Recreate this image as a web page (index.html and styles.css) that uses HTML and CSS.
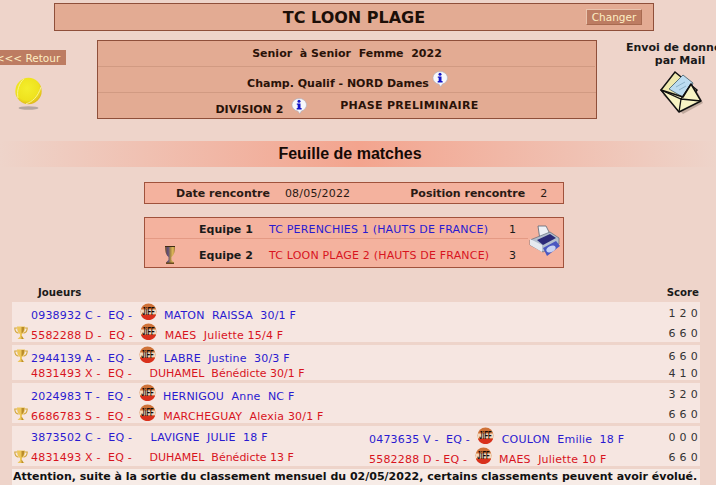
FILE: index.html
```html
<!DOCTYPE html>
<html lang="fr">
<head>
<meta charset="utf-8">
<title>Feuille de matches</title>
<link rel="stylesheet" href="styles.css">
</head>
<body>
<svg class="defs" width="0" height="0">
  <defs>
    <radialGradient id="ballfill" cx=".45" cy=".4" r=".6">
      <stop offset="0" stop-color="#f4ee2c"/>
      <stop offset=".75" stop-color="#efe21e"/>
      <stop offset="1" stop-color="#dfb81c"/>
    </radialGradient>
    <linearGradient id="gobfill" x1="0" x2="1" y1="0" y2="0">
      <stop offset="0" stop-color="#7c5a2a"/>
      <stop offset=".3" stop-color="#5a4a80"/>
      <stop offset=".55" stop-color="#a98a48"/>
      <stop offset=".8" stop-color="#e3bc5c"/>
      <stop offset="1" stop-color="#8c6a2a"/>
    </linearGradient>
    <symbol id="jiff" viewBox="0 0 18 18">
      <circle cx="9" cy="9" r="8.500" fill="#cf7238"/>
      <path d="M.6 7h16.800l.1 5H.5z" fill="#f3d9bf"/>
      <path d="M1 12.500h16a8.500 8.500 0 0 1-16 0z" fill="#d9301c"/>
      <text x="9" y="12.500" text-anchor="middle" textLength="13" lengthAdjust="spacingAndGlyphs" class="jiff-text">JiFF</text>
    </symbol>
    <symbol id="cup" viewBox="0 0 14 14">
      <path d="M3 2H.8C.8 5.500 2.500 6.800 4.500 7.200M11 2h2.200c0 3.500-1.700 4.800-3.700 5.200" fill="none" stroke="#d3a73c" stroke-width="1.100"/>
      <path d="M3 .5h8c0 4-1 6.500-3 7.500v2.500l2.500 2.500h-7L6 10.500V8C4 7 3 4.500 3 .5z" fill="#edc65a"/>
      <path d="M7.500 1h2.800c0 3-.8 5.500-2.800 6.500zM7.500 10h.5l1.500 3h-2z" fill="#b98c2a"/>
    </symbol>
    <symbol id="info" viewBox="0 0 16 16">
      <path d="M8 .5a7.300 6.400 0 0 1 2.400 12.500L8.800 15.800 7 13.200A7.300 6.400 0 0 1 8 .5z" fill="#f7f8fc" stroke="#a9acbd" stroke-width=".6"/>
      <circle cx="8" cy="3.200" r="1.500" fill="#1414c8"/>
      <path d="M5.800 5.500h3.700v4.600h1.100v1.300H5.700v-1.300h1V6.800h-.9z" fill="#1414c8"/>
    </symbol>
  </defs>
</svg>

<div class="page">
  <header class="title-box">
    <h1 class="club">TC LOON PLAGE</h1>
    <span class="btn btn-change">Changer</span>
  </header>

  <section class="top">
    <div class="back">
      <span class="btn btn-back">&lt;&lt;&lt; Retour</span>
      <svg class="ball" viewBox="0 0 30 34" width="30" height="34">
        <ellipse cx="14.500" cy="31" rx="10" ry="1.800" fill="#b5a6a0"/>
        <circle cx="14.500" cy="14" r="13.200" fill="url(#ballfill)"/>
        <path d="M10 1.800C5 6 2.500 14 4 21M27 10C24 20 18 25 12 26.800" fill="none" stroke="#f8f3a0" stroke-width=".9"/>
      </svg>
    </div>

    <div class="info-box">
      <div class="info-line">Senior&nbsp; à Senior&nbsp; Femme&nbsp; 2022</div>
      <div class="info-line info-mid"><span>Champ. Qualif - NORD Dames</span><svg class="info-ic raised"><use href="#info"/></svg></div>
      <div class="info-line info-split">
        <span class="div-name">DIVISION 2 <svg class="info-ic raised"><use href="#info"/></svg></span>
        <span class="phase">PHASE PRELIMINAIRE</span>
      </div>
    </div>

    <div class="mail">
      <div class="mail-text">Envoi de données<br>par Mail</div>
      <svg class="mail-ic" viewBox="0 0 44 44" width="44" height="44">
        <path d="M3 23 23 42 43 31 36 17 17 3z" fill="#6b5a4a" opacity=".35" transform="translate(1 2)"/>
        <path d="M2 20 16 2l22 18-16 20z" fill="#efe9ae" stroke="#111" stroke-width="1.500"/>
        <path d="M10 19 24 5l10 8-7 16z" fill="#bcdcf0" stroke="#3e5a68" stroke-width=".8"/>
        <path d="M17 17l9-5M20 20l7-4" stroke="#7fa8bf" stroke-width=".8"/>
        <path d="M2 20 24 27 32 14 42 31 20 42z" fill="#f8f4c4" stroke="#111" stroke-width="1.500" stroke-linejoin="round"/>
        <path d="M2 20 22 29 42 31M20 42 22 29 32 14" fill="none" stroke="#111" stroke-width="1.300"/>
      </svg>
    </div>
  </section>

  <h2 class="band"><span class="band-text">Feuille de matches</span></h2>

  <section class="date-box">
    <b class="date-label">Date rencontre</b>
    <span class="date-value">08/05/2022</span>
    <b class="pos-label">Position rencontre</b>
    <span class="pos-value">2</span>
  </section>

  <section class="teams">
    <div class="team team-1">
      <span class="team-ic"></span>
      <b class="team-label">Equipe 1</b>
      <span class="team-name blue">TC PERENCHIES 1 (HAUTS DE FRANCE)</span>
      <span class="team-score">1</span>
    </div>
    <div class="team team-2">
      <span class="team-ic">
        <svg viewBox="0 0 14 20" width="14" height="20">
          <path d="M2 1h10c0 6-1 9-3.500 11v3l2.500 2.500V19H3v-1.500L5.500 15v-3C3 10 2 7 2 1z" fill="url(#gobfill)"/>
          <path d="M3 17.500h8V19H3z" fill="#6a4a1e"/>
          <path d="M2 1h10v1H2z" fill="#3d2c14"/>
        </svg>
      </span>
      <b class="team-label">Equipe 2</b>
      <span class="team-name red">TC LOON PLAGE 2 (HAUTS DE FRANCE)</span>
      <span class="team-score">3</span>
    </div>
    <svg class="printer" viewBox="0 0 32 32" width="32" height="32">
      <path d="M9 1h8l5 10-11 4z" fill="#eef1f6" stroke="#5a6474" stroke-width=".8"/>
      <path d="M1 15 21 7l9 6v6L14 27 1 20z" fill="#b4bfce" stroke="#4f5a6a" stroke-width=".6"/>
      <path d="M1 14l12 6v7L1 20z" fill="#e6eaf0"/>
      <path d="M8 15 21 9l6 4-13 7z" fill="#2c2a78"/>
      <path d="M14 23 27 16l4 5-13 10z" fill="#4a57c0"/>
      <ellipse cx="22" cy="24" rx="5" ry="3" fill="#c8d2f2" transform="rotate(-25 22 24)"/>
    </svg>
  </section>

  <section class="players">
    <div class="players-head"><b>Joueurs</b><b>Score</b></div>

    <div class="match match-a">
      <div class="line"><span class="slot"></span><span class="p blue">0938932 C -  EQ -  <svg class="jiff"><use href="#jiff"/></svg>  MATON  RAISSA  30/1 F</span><span class="score">1 2 0</span></div>
      <div class="line"><span class="slot"><svg class="cup"><use href="#cup"/></svg></span><span class="p red">5582288 D -  EQ -  <svg class="jiff"><use href="#jiff"/></svg>  MAES  Juliette 15/4 F</span><span class="score">6 6 0</span></div>
    </div>

    <div class="match match-b">
      <div class="line"><span class="slot"><svg class="cup"><use href="#cup"/></svg></span><span class="p blue">2944139 A -  EQ -  <svg class="jiff"><use href="#jiff"/></svg>  LABRE  Justine  30/3 F</span><span class="score">6 6 0</span></div>
      <div class="line short"><span class="slot"></span><span class="p red">4831493 X -  EQ -     <span class="tight">DUHAMEL  Bénédicte 30/1 F</span></span><span class="score score-low">4 1 0</span></div>
    </div>

    <div class="match match-c">
      <div class="line"><span class="slot"></span><span class="p blue">2024983 T -  EQ -  <svg class="jiff"><use href="#jiff"/></svg>  HERNIGOU  Anne  NC F</span><span class="score">3 2 0</span></div>
      <div class="line"><span class="slot"><svg class="cup"><use href="#cup"/></svg></span><span class="p red">6686783 S -  EQ -  <svg class="jiff"><use href="#jiff"/></svg>  MARCHEGUAY  Alexia 30/1 F</span><span class="score">6 6 0</span></div>
    </div>

    <div class="match match-d">
      <div class="line"><span class="slot"></span><span class="p p-single blue">3873502 C -  EQ -     LAVIGNE  JULIE  18 F</span><span class="p blue">0473635 V -  EQ -  <svg class="jiff"><use href="#jiff"/></svg>  COULON  Emilie  18 F</span><span class="score">0 0 0</span></div>
      <div class="line"><span class="slot"><svg class="cup"><use href="#cup"/></svg></span><span class="p p-single red">4831493 X -  EQ -     <span class="tight">DUHAMEL  Bénédicte 13 F</span></span><span class="p red">5582288 D - EQ -  <svg class="jiff"><use href="#jiff"/></svg>  MAES  Juliette 10 F</span><span class="score">6 6 0</span></div>
    </div>

    <div class="notice">Attention, suite à la sortie du classement mensuel du 02/05/2022, certains classements peuvent avoir évolué.</div>
  </section>
</div>
</body>
</html>
```

FILE: styles.css
```css
html, body { margin: 0; padding: 0; height: 100%; overflow: hidden; }
body {
  background: #eed4ca;
  color: #1a1a1a;
  font: 11px "DejaVu Sans", Verdana, sans-serif;
}
.defs { position: absolute; }
.jiff-text { font: bold 11px "Liberation Sans", sans-serif; fill: #120a06; }

.page { width: 716px; height: 485px; overflow: hidden; display: flex; flex-direction: column; }

.title-box {
  width: 598px; height: 26px; margin: 3px 0 0 54px;
  background: #e3ab93; border: 1px solid #8f4f3a;
  display: flex; align-items: center; justify-content: center;
  position: relative;
}
.club { margin: 0; font: bold 16px "DejaVu Sans", sans-serif; color: #1c0f08; }
.btn {
  background: #bd7c62; color: #fdeec2; font-size: 10.5px;
  display: flex; align-items: center; justify-content: center;
  white-space: nowrap;
}
.btn-change {
  position: absolute; right: 11px; top: 5px;
  width: 56px; height: 16px; border: 1px solid #e9c4ae; border-right-color: #a86a50; border-bottom-color: #a86a50; box-sizing: border-box;
}

.top { display: flex; margin-top: 9px; height: 79px; }
.back { width: 97px; flex: none; display: flex; flex-direction: column; padding-top: 10px; box-sizing: border-box; }
.btn-back { width: 72px; height: 15px; margin-left: -6px; padding-right: 4px; box-sizing: border-box; }
.ball { margin: 12px 0 0 14px; }

.info-box {
  width: 498px; height: 77px; flex: none;
  background: #e3ab93; border: 1px solid #8f4f3a;
  display: flex; flex-direction: column;
  font-weight: bold; color: #2a1208;
}
.info-line {
  flex: 1; display: flex; align-items: center; justify-content: center; gap: 4px;
  border-top: 1px solid #d19a82; white-space: pre;
}
.info-line:first-child { border-top: 0; }
.info-mid span { margin-top: 7px; margin-left: 2px; }
.info-mid .info-ic { margin-top: -1px; }
.info-mid { gap: 3px; margin-right: 1px; }
.info-split { gap: 33px; }
.div-name { display: flex; align-items: center; gap: 4px; margin-top: 8px; }
.phase { letter-spacing: .3px; }
.info-ic { width: 16px; height: 16px; }
.raised { margin-top: -8px; }

.mail { margin-left: 29px; width: 108px; flex: none; text-align: center; font-weight: bold; color: #1a1a1a; white-space: nowrap; }
.mail-text { line-height: 13px; margin-top: 1px; }
.mail-ic { display: block; margin: 3px auto 0; transform: translateX(1px); }

.band {
  margin: 22px 0 0; height: 26px; text-align: center;
  font: bold 16px/26px "Liberation Sans", sans-serif; color: #150a05;
  background: linear-gradient(90deg, #eed4ca 0%, #f3a48e 50%, #eed4ca 100%);
  padding-right: 16px;
}

.date-box {
  width: 418px; height: 20px; margin: 15px 0 0 144px;
  background: #f4b29e; border: 1px solid #a0523c;
  display: flex; align-items: center; color: #2a1a14;
}
.date-label { margin-left: 31px; }
.date-value { margin-left: 15px; letter-spacing: .2px; }
.pos-label { margin-left: 60px; }
.pos-value { margin-left: 15px; }

.teams {
  width: 418px; height: 49px; margin: 13px 0 0 144px;
  background: #f4b29e; border: 1px solid #a0523c;
  display: flex; flex-direction: column; position: relative;
}
.team { display: flex; align-items: center; width: 383px; }
.team-1 { flex: none; border-bottom: 1px solid #e49a84; padding-top: 3px; box-sizing: border-box; height: 21px; }
.team-2 { flex: 1; padding-top: 5px; }
.team-ic { width: 54px; flex: none; padding-left: 18px; box-sizing: border-box; display: flex; margin-top: -2px; }
.team-label { width: 70px; flex: none; }
.team-name { width: 240px; flex: none; letter-spacing: .18px; }
.blue { color: #2a1ad0; }
.red { color: #d8141e; }
.printer { position: absolute; right: 2px; top: 7px; }

.players { margin: 17px 0 0 12px; width: 688px; }
.players-head { display: flex; justify-content: space-between; font-weight: bold; font-size: 10.2px; height: 14px; padding: 0 1px 0 26px; line-height: 16px; }
.match { background: #f6e6e1; margin-top: 3px; display: flex; flex-direction: column; justify-content: flex-start; }
.match-a { height: 40px; }
.match-b { height: 35px; }
.match-c { height: 40px; }
.match-d { height: 40px; }
.line { display: flex; align-items: flex-end; height: 20px; white-space: pre; line-height: 13px; }
.line.short { height: 15px; }
.slot { width: 19px; flex: none; display: flex; padding-left: 2px; box-sizing: border-box; margin-bottom: 2px; }
.cup { width: 14px; height: 14px; }
.p { flex: none; display: inline-block; letter-spacing: .2px; }
.tight { letter-spacing: 0; margin-left: -1px; }
.p-single { width: 338px; margin-bottom: 2px; }
.jiff { width: 17px; height: 17px; vertical-align: -1px; }
.score { margin-left: auto; margin-bottom: 2px; padding-right: 2px; color: #333; letter-spacing: .3px; }
.score-low { margin-bottom: 0; }
.notice {
  background: #f7ece7; margin-top: 3px; height: 16px; line-height: 16px;
  font-weight: bold; color: #111; padding-left: 1px; white-space: nowrap;
}
```
